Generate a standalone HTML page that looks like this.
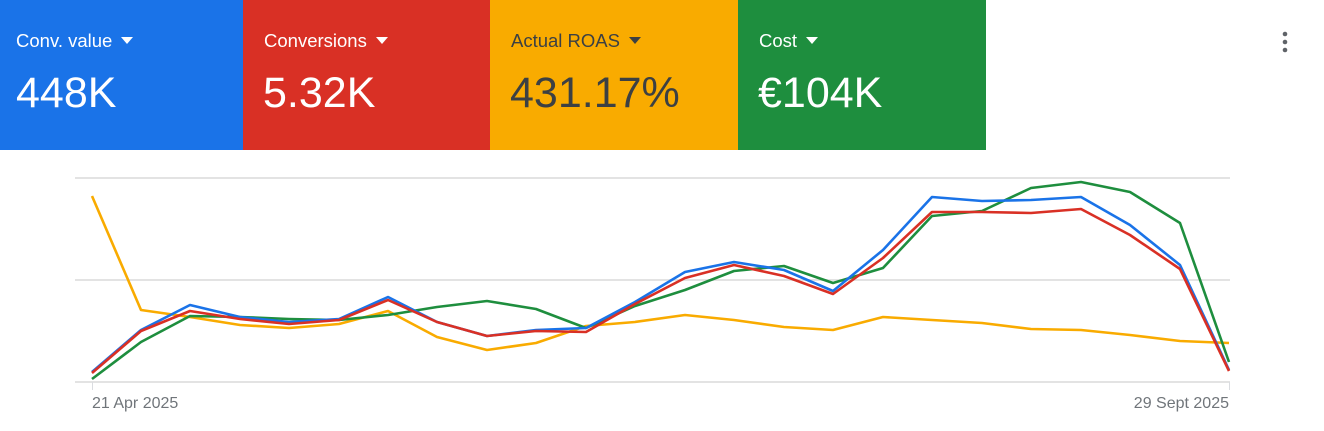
<!DOCTYPE html>
<html><head><meta charset="utf-8"><style>
html,body{margin:0;padding:0;background:#fff;width:1324px;height:431px;overflow:hidden;font-family:"Liberation Sans",Arial,sans-serif;}
.tile{position:absolute;top:0;height:150px;}
.lab{position:absolute;left:21px;top:30px;font-size:18.5px;line-height:21px;white-space:nowrap;}
.lab i{display:inline-block;width:0;height:0;border-left:6.5px solid transparent;border-right:6.5px solid transparent;border-top:7px solid currentColor;vertical-align:middle;margin-left:9px;margin-top:-3px;}
.val{position:absolute;left:20px;top:70px;font-size:43px;line-height:46px;white-space:nowrap;}
.w{color:#fff}.d{color:#3c4043}
.ax{position:absolute;top:395px;font-size:16px;color:#70757a;}
</style></head><body>
<div class="tile w" style="left:0;width:243px;background:#1a73e8"><div class="lab" style="left:16px">Conv. value<i></i></div><div class="val" style="left:16px">448K</div></div>
<div class="tile w" style="left:243px;width:247px;background:#d93025"><div class="lab">Conversions<i></i></div><div class="val">5.32K</div></div>
<div class="tile d" style="left:490px;width:248px;background:#f9ab00"><div class="lab">Actual ROAS<i></i></div><div class="val">431.17%</div></div>
<div class="tile w" style="left:738px;width:248px;background:#1e8e3e"><div class="lab">Cost<i></i></div><div class="val">€104K</div></div>
<svg style="position:absolute;left:1279px;top:30px" width="12" height="26"><circle cx="6" cy="4" r="2.3" fill="#5f6368"/><circle cx="6" cy="12" r="2.3" fill="#5f6368"/><circle cx="6" cy="20" r="2.3" fill="#5f6368"/></svg>
<svg style="position:absolute;left:0;top:0" width="1324" height="431">
<g stroke="#e3e3e3" stroke-width="2"><line x1="75" y1="178" x2="1230" y2="178"/><line x1="75" y1="280" x2="1230" y2="280"/><line x1="75" y1="382" x2="1230" y2="382"/></g>
<g stroke="#dadce0" stroke-width="1"><line x1="92.5" y1="382" x2="92.5" y2="390"/><line x1="1229.5" y1="382" x2="1229.5" y2="390"/></g>
<g fill="none" stroke-width="2.6" stroke-linejoin="round">
<polyline stroke="#f9ab00" points="92,196 141,310 190,317 240,325 289,328 339,324 388,311 437,337 487,350 536,343 586,326 635,322 685,315 734,320 784,327 833,330 883,317 932,320 982,323 1031,329 1081,330 1130,335 1180,341 1229,343"/>
<polyline stroke="#1e8e3e" points="92,379 141,342 190,316 240,317 289,319 339,320 388,315 437,307 487,301 536,309 586,328 635,306 685,290 734,271 784,266 833,283 883,268 932,216 982,211 1031,188 1081,182 1130,192 1180,223 1229,362"/>
<polyline stroke="#1a73e8" points="92,372 141,330 190,305 240,317 289,322 339,319 388,297 437,322 487,336 536,330 586,328 635,302 685,272 734,262 784,270 833,291 883,250 932,197 982,201 1031,200 1081,197 1130,225 1180,265 1229,370"/>
<polyline stroke="#d93025" points="92,373 141,331 190,311 240,319 289,324 339,320 388,300 437,322 487,336 536,331 586,332 635,304 685,278 734,265 784,276 833,294 883,258 932,212 982,212 1031,213 1081,209 1130,235 1180,269 1229,371"/>
</g>
</svg>
<div class="ax" style="left:92px">21 Apr 2025</div>
<div class="ax" style="right:95px">29 Sept 2025</div>
</body></html>
